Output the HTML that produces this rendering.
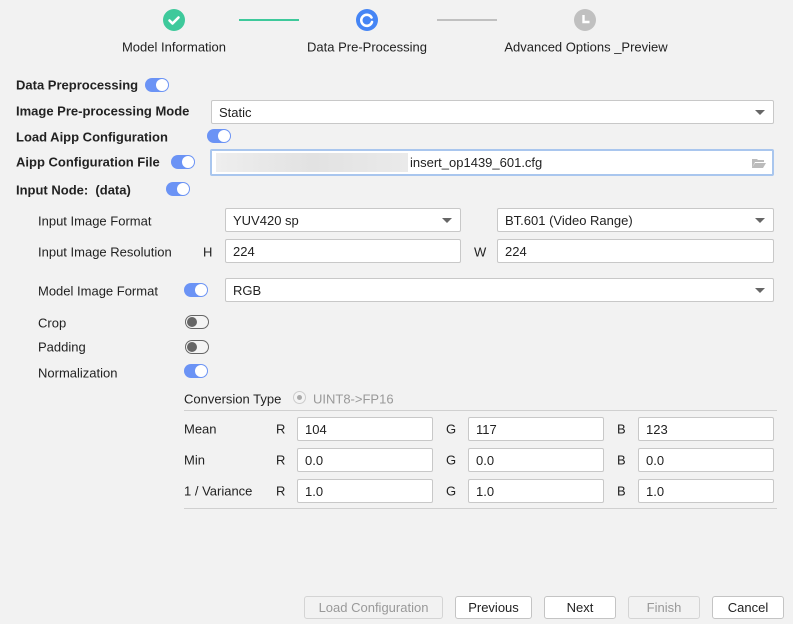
<!DOCTYPE html><html><head><style>
body{margin:0;width:793px;height:624px;background:#f2f2f2;font-family:"Liberation Sans",sans-serif;font-size:13px;color:#222;position:relative;overflow:hidden}
.a{position:absolute}
.b{font-weight:bold}
.l{position:absolute;transform:translateY(-50%);white-space:nowrap}
.in{position:absolute;background:#fff;border:1px solid #c8c8c8;border-radius:2px;box-sizing:border-box;padding-left:7px;display:flex;align-items:center;white-space:nowrap}
.sel::after{content:"";position:absolute;right:8px;top:50%;margin-top:-2px;border-left:5px solid transparent;border-right:5px solid transparent;border-top:5px solid #666}
.t{position:absolute;width:24px;height:14px;border-radius:7px;background:#6b93f5}
.t::after{content:"";position:absolute;right:1px;top:1px;width:12px;height:12px;border-radius:50%;background:#fff}
.t.off{background:#f4f4f4;border:1px solid #666;box-sizing:border-box}
.t.off::after{left:1px;right:auto;top:1px;width:10px;height:10px;background:#666}
.btn{position:absolute;top:596px;height:23px;background:#fff;border:1px solid #c4c4c4;border-radius:3px;box-sizing:border-box;display:flex;align-items:center;justify-content:center}
.btn.d{background:#f2f2f2;color:#999;border-color:#d4d4d4}
</style></head><body>
<div class="a" style="left:163px;top:9px;width:22px;height:22px;border-radius:50%;background:#3ec99b"></div>
<svg class="a" style="left:163px;top:9px" width="22" height="22"><path d="M6.5 11.5l3 3 6-6" stroke="#fff" stroke-width="2.6" fill="none" stroke-linecap="round" stroke-linejoin="round"/></svg>
<div class="a" style="left:239px;top:19px;width:60px;height:2px;background:#3ec99b"></div>
<div class="a" style="left:356px;top:9px;width:22px;height:22px;border-radius:50%;background:#4585f5"></div>
<svg class="a" style="left:356px;top:9px" width="22" height="22"><path d="M15.5 8.5A5.5 5.5 0 1 0 16 13" stroke="#fff" stroke-width="2.6" fill="none" stroke-linecap="round"/></svg>
<div class="a" style="left:437px;top:19px;width:60px;height:2px;background:#c0c0c0"></div>
<div class="a" style="left:574px;top:9px;width:22px;height:22px;border-radius:50%;background:#c0c0c0"></div>
<svg class="a" style="left:574px;top:9px" width="22" height="22"><path d="M9.5 6v7h6" stroke="#fff" stroke-width="2.4" fill="none"/></svg>
<div class="l" style="left:174px;top:47px;transform:translate(-50%,-50%)">Model Information</div>
<div class="l" style="left:367px;top:47px;transform:translate(-50%,-50%)">Data Pre-Processing</div>
<div class="l" style="left:586px;top:47px;transform:translate(-50%,-50%)">Advanced Options _Preview</div>

<div class="l b" style="left:16px;top:85px">Data Preprocessing</div><div class="t" style="left:145px;top:78px"></div>
<div class="l b" style="left:16px;top:111px">Image Pre-processing Mode</div>
<div class="in sel" style="left:211px;top:100px;width:563px;height:24px">Static</div>
<div class="l b" style="left:16px;top:137px">Load Aipp Configuration</div><div class="t" style="left:207px;top:129px"></div>
<div class="l b" style="left:16px;top:162px">Aipp Configuration File</div><div class="t" style="left:171px;top:155px"></div>
<div class="in" style="left:210px;top:149px;width:564px;height:27px;border:2px solid #a9c6ee;padding-left:4px"><span style="display:inline-block;width:192px;height:19px;background:linear-gradient(90deg,#eee,#e2e2e2,#eaeaea);margin-right:2px"></span>insert_op1439_601.cfg
<svg class="a" style="right:6px;top:7px" width="14" height="10"><path d="M0 1h5l1 1h6v2H3L0 10zM3 5h11l-3 5H0z" fill="#bbb"/></svg></div>
<div class="l b" style="left:16px;top:190px">Input Node:&nbsp;&nbsp;(data)</div><div class="t" style="left:166px;top:182px"></div>

<div class="l" style="left:38px;top:221px">Input Image Format</div>
<div class="in sel" style="left:225px;top:208px;width:236px;height:24px">YUV420 sp</div>
<div class="in sel" style="left:497px;top:208px;width:277px;height:24px">BT.601 (Video Range)</div>
<div class="l" style="left:38px;top:252px">Input Image Resolution</div>
<div class="l" style="left:203px;top:252px">H</div>
<div class="in" style="left:225px;top:239px;width:236px;height:24px">224</div>
<div class="l" style="left:474px;top:252px">W</div>
<div class="in" style="left:497px;top:239px;width:277px;height:24px">224</div>
<div class="l" style="left:38px;top:291px">Model Image Format</div><div class="t" style="left:184px;top:283px"></div>
<div class="in sel" style="left:225px;top:278px;width:549px;height:24px">RGB</div>
<div class="l" style="left:38px;top:323px">Crop</div><div class="t off" style="left:185px;top:315px"></div>
<div class="l" style="left:38px;top:347px">Padding</div><div class="t off" style="left:185px;top:340px"></div>
<div class="l" style="left:38px;top:373px">Normalization</div><div class="t" style="left:184px;top:364px"></div>
<div class="l" style="left:184px;top:399px">Conversion Type</div>
<div class="a" style="left:293px;top:391px;width:13px;height:13px;border:1px solid #ccc;border-radius:50%;box-sizing:border-box;background:#f4f4f4"></div>
<div class="a" style="left:297px;top:395px;width:5px;height:5px;border-radius:50%;background:#aaa"></div>
<div class="l" style="left:313px;top:399px;color:#999">UINT8-&gt;FP16</div>
<div class="a" style="left:184px;top:410px;width:593px;height:1px;background:#d0d0d0"></div>
<div class="l" style="left:184px;top:429px">Mean</div>
<div class="l" style="left:184px;top:460px">Min</div>
<div class="l" style="left:184px;top:491px">1 / Variance</div>
<div class="l" style="left:276px;top:429px">R</div><div class="l" style="left:446px;top:429px">G</div><div class="l" style="left:617px;top:429px">B</div>
<div class="l" style="left:276px;top:460px">R</div><div class="l" style="left:446px;top:460px">G</div><div class="l" style="left:617px;top:460px">B</div>
<div class="l" style="left:276px;top:491px">R</div><div class="l" style="left:446px;top:491px">G</div><div class="l" style="left:617px;top:491px">B</div>
<div class="in" style="left:297px;top:417px;width:136px;height:24px">104</div>
<div class="in" style="left:468px;top:417px;width:136px;height:24px">117</div>
<div class="in" style="left:638px;top:417px;width:136px;height:24px">123</div>
<div class="in" style="left:297px;top:448px;width:136px;height:24px">0.0</div>
<div class="in" style="left:468px;top:448px;width:136px;height:24px">0.0</div>
<div class="in" style="left:638px;top:448px;width:136px;height:24px">0.0</div>
<div class="in" style="left:297px;top:479px;width:136px;height:24px">1.0</div>
<div class="in" style="left:468px;top:479px;width:136px;height:24px">1.0</div>
<div class="in" style="left:638px;top:479px;width:136px;height:24px">1.0</div>
<div class="a" style="left:184px;top:508px;width:593px;height:1px;background:#d0d0d0"></div>

<div class="btn d" style="left:304px;width:139px">Load Configuration</div>
<div class="btn" style="left:455px;width:77px">Previous</div>
<div class="btn" style="left:544px;width:72px">Next</div>
<div class="btn d" style="left:628px;width:72px">Finish</div>
<div class="btn" style="left:712px;width:72px">Cancel</div>
</body></html>
